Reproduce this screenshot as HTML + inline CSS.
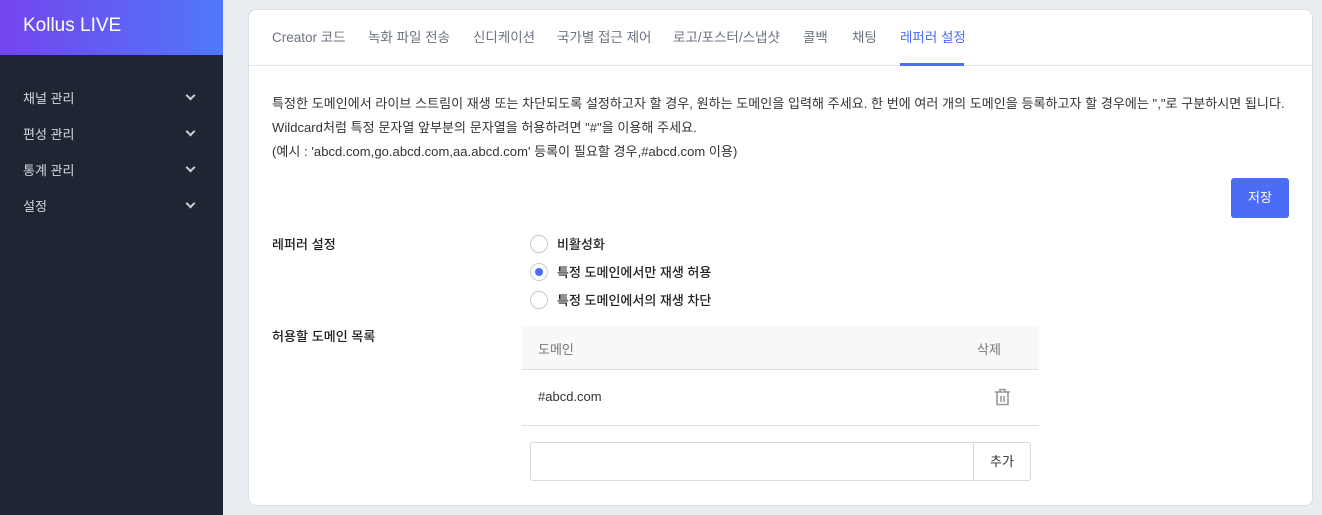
<!DOCTYPE html>
<html><head><meta charset="utf-8"><style>
*{box-sizing:border-box;margin:0;padding:0}
body{width:1322px;height:515px;overflow:hidden;background:#e9ecf0;font-family:"Liberation Sans","Noto Sans CJK KR",sans-serif;position:relative}
.a{position:absolute;white-space:nowrap}
#side{left:0;top:0;width:223px;height:515px;background:#1f2533}
#logo{left:0;top:0;width:223px;height:55px;background:linear-gradient(90deg,#7445ee,#4f78f8)}
#logo span{position:absolute;left:23px;top:15px;color:#fff;font-size:19px}
.m{left:23px;color:#d5d8de;font-size:13px}
.chev{left:187px;width:7px;height:7px;border-right:2px solid #c9ccd2;border-bottom:2px solid #c9ccd2;transform:rotate(45deg)}
#card{left:248px;top:9px;width:1065px;height:497px;background:#fff;border:1px solid #dcdfe6;border-radius:8px}
.t{top:26px;font-size:13.5px;color:#6b7280}
.p{left:272px;font-size:13px;color:#333;letter-spacing:0.05px}
.r{width:18px;height:18px;border:1px solid #c8ccd3;border-radius:50%;left:530px}
.rl{left:557px;font-size:13px;color:#222;font-weight:500}
</style></head><body>
<div class="a" id="side"></div>
<div class="a" id="logo"><span>Kollus LIVE</span></div>
<div class="a m" style="top:88px">채널 관리</div><div class="a chev" style="top:92px"></div>
<div class="a m" style="top:124px">편성 관리</div><div class="a chev" style="top:128px"></div>
<div class="a m" style="top:160px">통계 관리</div><div class="a chev" style="top:164px"></div>
<div class="a m" style="top:196px">설정</div><div class="a chev" style="top:200px"></div>
<div class="a" id="card"></div>
<div class="a t" style="left:272px">Creator 코드</div>
<div class="a t" style="left:368px">녹화 파일 전송</div>
<div class="a t" style="left:473px">신디케이션</div>
<div class="a t" style="left:557px">국가별 접근 제어</div>
<div class="a t" style="left:673px">로고/포스터/스냅샷</div>
<div class="a t" style="left:803px">콜백</div>
<div class="a t" style="left:852px">채팅</div>
<div class="a t" style="left:900px;color:#4a6cf7">레퍼러 설정</div>
<div class="a" style="left:249px;top:65px;width:1063px;height:1px;background:#e3e5e9"></div>
<div class="a" style="left:900px;top:63px;width:64px;height:3px;background:#4a6cf7"></div>
<div class="a p" style="top:93px">특정한 도메인에서 라이브 스트림이 재생 또는 차단되도록 설정하고자 할 경우, 원하는 도메인을 입력해 주세요. 한 번에 여러 개의 도메인을 등록하고자 할 경우에는 ","로 구분하시면 됩니다.</div>
<div class="a p" style="top:117px">Wildcard처럼 특정 문자열 앞부분의 문자열을 허용하려면 "#"을 이용해 주세요.</div>
<div class="a p" style="top:141px">(예시 : 'abcd.com,go.abcd.com,aa.abcd.com' 등록이 필요할 경우,#abcd.com 이용)</div>
<div class="a" style="left:1231px;top:178px;width:58px;height:40px;background:#4a6cf7;border-radius:3px;color:#fff;font-size:13px;text-align:center;line-height:40px">저장</div>
<div class="a p" style="top:234px;color:#222;font-weight:500">레퍼러 설정</div>
<div class="a r" style="top:235px"></div><div class="a rl" style="top:234px">비활성화</div>
<div class="a r" style="top:263px"></div><div class="a" style="left:535px;top:268px;width:8px;height:8px;border-radius:50%;background:#4a6cf7"></div><div class="a rl" style="top:262px">특정 도메인에서만 재생 허용</div>
<div class="a r" style="top:291px"></div><div class="a rl" style="top:290px">특정 도메인에서의 재생 차단</div>
<div class="a p" style="top:326px;color:#222;font-weight:500">허용할 도메인 목록</div>
<div class="a" style="left:522px;top:326px;width:517px;height:44px;background:#f7f8fa;border-bottom:1px solid #dcdfe4"></div>
<div class="a" style="left:538px;top:339px;font-size:13px;color:#777">도메인</div>
<div class="a" style="left:977px;top:339px;font-size:13px;color:#777">삭제</div>
<div class="a" style="left:538px;top:389px;font-size:13px;color:#333">#abcd.com</div>
<svg class="a" style="left:994px;top:388px" width="17" height="18" viewBox="0 0 17 18"><g fill="none" stroke="#999" stroke-width="1.6"><path d="M1 4h15M6 4V1.5h5V4M3 4v12.5h11V4M7 8v6M10 8v6"/></g></svg>
<div class="a" style="left:522px;top:425px;width:517px;height:1px;background:#dcdfe4"></div>
<div class="a" style="left:530px;top:442px;width:501px;height:39px;border:1px solid #d6d9de;border-radius:3px"></div>
<div class="a" style="left:973px;top:442px;width:58px;height:39px;border:1px solid #d6d9de;border-radius:0 3px 3px 0;font-size:13px;color:#333;text-align:center;line-height:37px">추가</div>
</body></html>
